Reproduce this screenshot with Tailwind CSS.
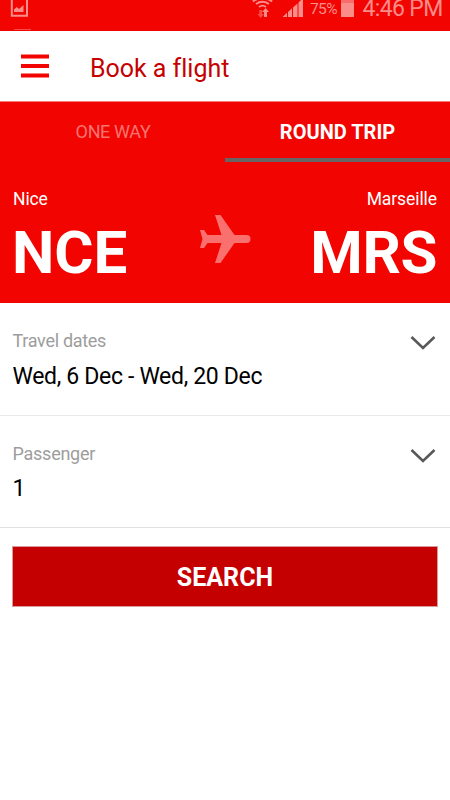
<!DOCTYPE html>
<html lang="en">
<head>
<meta charset="utf-8">
<title>Book a flight</title>
<script src="https://cdn.jsdelivr.net/npm/@tailwindcss/browser@4"></script>
</head>
<body class="bg-white">
<div class="w-[450px] h-[800px] overflow-hidden bg-white font-['Roboto',sans-serif] flex flex-col">
  <div class="h-[31px] shrink-0 bg-[#f20500] text-[#fa8c8a] flex items-start relative">
    <svg class="w-[40px] h-[31px] shrink-0" viewBox="0 0 40 31"><path d="M11.800 -3V15.700H27V-3" fill="none" stroke="currentColor" stroke-width="2"/><path d="M14 12V9.500L16.800 7L19 9L23.500 5V12Z" fill="currentColor"/><path d="M14 29.500H31" stroke="#f74b48" stroke-width="1"/></svg>
    <svg class="w-[52px] h-[20px] ml-[212px] shrink-0" viewBox="252 0 52 20"><g fill="none" stroke="currentColor" stroke-width="1.800"><path d="M252.800 1.500Q262.500 -5 272.200 1.500"/><path d="M256 4Q262.500 -.5 269 4"/><path d="M259 7Q262.500 4.200 266 7"/></g><path d="M264 17V12H262L265.700 8L269 12H267V17Z" fill="currentColor"/><path d="M259.300 10H262V14H264L260.700 18L257.500 14H259.300Z" fill="#f74b48"/><path d="M282.500 17L287 12.800V17ZM288 12L292 8.200V17H288ZM293 7.500L297.500 3.500V17H293ZM298.500 2.500L303 -2V17H298.500Z" fill="currentColor"/></svg>
    <span class="ml-[6px] w-[31px] shrink-0 text-[15.500px] leading-[18px] tracking-[-0.6px]">75%</span>
    <span class="w-[13px] h-[17px] shrink-0 bg-[#fa8c8a] border-t-[3px] border-[#f86d6b]"></span>
    <span class="ml-[8.500px] text-[23px] leading-[18px] whitespace-nowrap tracking-[-0.650px]">4:46 PM</span>
  </div>
  <header class="h-[70px] shrink-0 flex items-center pl-[21px]">
    <svg class="w-[28px] h-[24px]" viewBox="0 0 28 24"><path d="M0 2.500H28M0 12H28M0 21.500H28" stroke="#f20500" stroke-width="4"/></svg>
    <h1 class="ml-[41px] mt-[6px] text-[25px] leading-[30px] tracking-[-0.020px] text-[#c60000] whitespace-nowrap">Book a flight</h1>
  </header>
  <section class="h-[202px] shrink-0 bg-[#f20500] text-white flex flex-col border-t border-[#f77b78]">
    <div class="h-[60px] flex text-center text-[18px] leading-[60px]">
      <div class="w-[225px] pl-[1px] text-[#f87472] tracking-[-0.350px]">ONE WAY</div>
      <div class="w-[225px] font-bold text-[20px] border-b-4 border-[#686464]">ROUND TRIP</div>
    </div>
    <div class="flex justify-between px-[13px] pt-[25px]">
      <div class="w-[140px]"><div class="text-[17.500px] leading-[24px] tracking-[-0.100px]">Nice</div><div class="text-[60px] leading-[60px] font-bold mt-[12px] -ml-[1px]">NCE</div></div>
      <svg class="w-[52px] h-[50px] mt-[27px] ml-[2px]" viewBox="200 214 52 50"><path d="M215 215H220.500L234.500 235H246.500Q250.500 235.200 250.500 239T246.500 243H234.500L220.500 263H215L221.500 243H207.500L204 248H200L202.500 239L200 230H204L207.500 235H221.500Z" fill="#f9706e"/></svg>
      <div class="w-[140px] text-right"><div class="text-[17.500px] leading-[24px] tracking-[-0.080px]">Marseille</div><div class="text-[60px] leading-[60px] font-bold mt-[12px] tracking-[-0.400px]">MRS</div></div>
    </div>
  </section>
  <section class="h-[113px] shrink-0 flex justify-between border-b border-[#e9e9e9] pl-[12.500px] pr-[14.500px] pt-[26px]">
    <div><div class="text-[18px] leading-[24px] tracking-[-0.300px] text-[#9d9d9d]">Travel dates</div><div class="text-[23px] leading-[28px] mt-[10px] tracking-[-0.330px]">Wed, 6 Dec - Wed, 20 Dec</div></div>
    <svg class="w-[26px] h-[16px] mt-[6px]" viewBox="0 0 26 16"><path d="M1.500 2L13 13L24.500 2" fill="none" stroke="#59595b" stroke-width="2.600"/></svg>
  </section>
  <section class="h-[112px] shrink-0 flex justify-between border-b border-[#e0e0e0] pl-[12.500px] pr-[14.500px] pt-[26px]">
    <div><div class="text-[18px] leading-[24px] tracking-[-0.250px] text-[#9d9d9d]">Passenger</div><div class="text-[23px] leading-[28px] mt-[9px]">1</div></div>
    <svg class="w-[26px] h-[16px] mt-[6px]" viewBox="0 0 26 16"><path d="M1.500 2L13 13L24.500 2" fill="none" stroke="#59595b" stroke-width="2.600"/></svg>
  </section>
  <button class="mt-[18px] mx-[12px] h-[61px] pt-[3px] shrink-0 bg-[#c50000] border border-[#d99a9a] text-white text-[25px] leading-[30px] font-bold">SEARCH</button>
</div>
</body>
</html>
